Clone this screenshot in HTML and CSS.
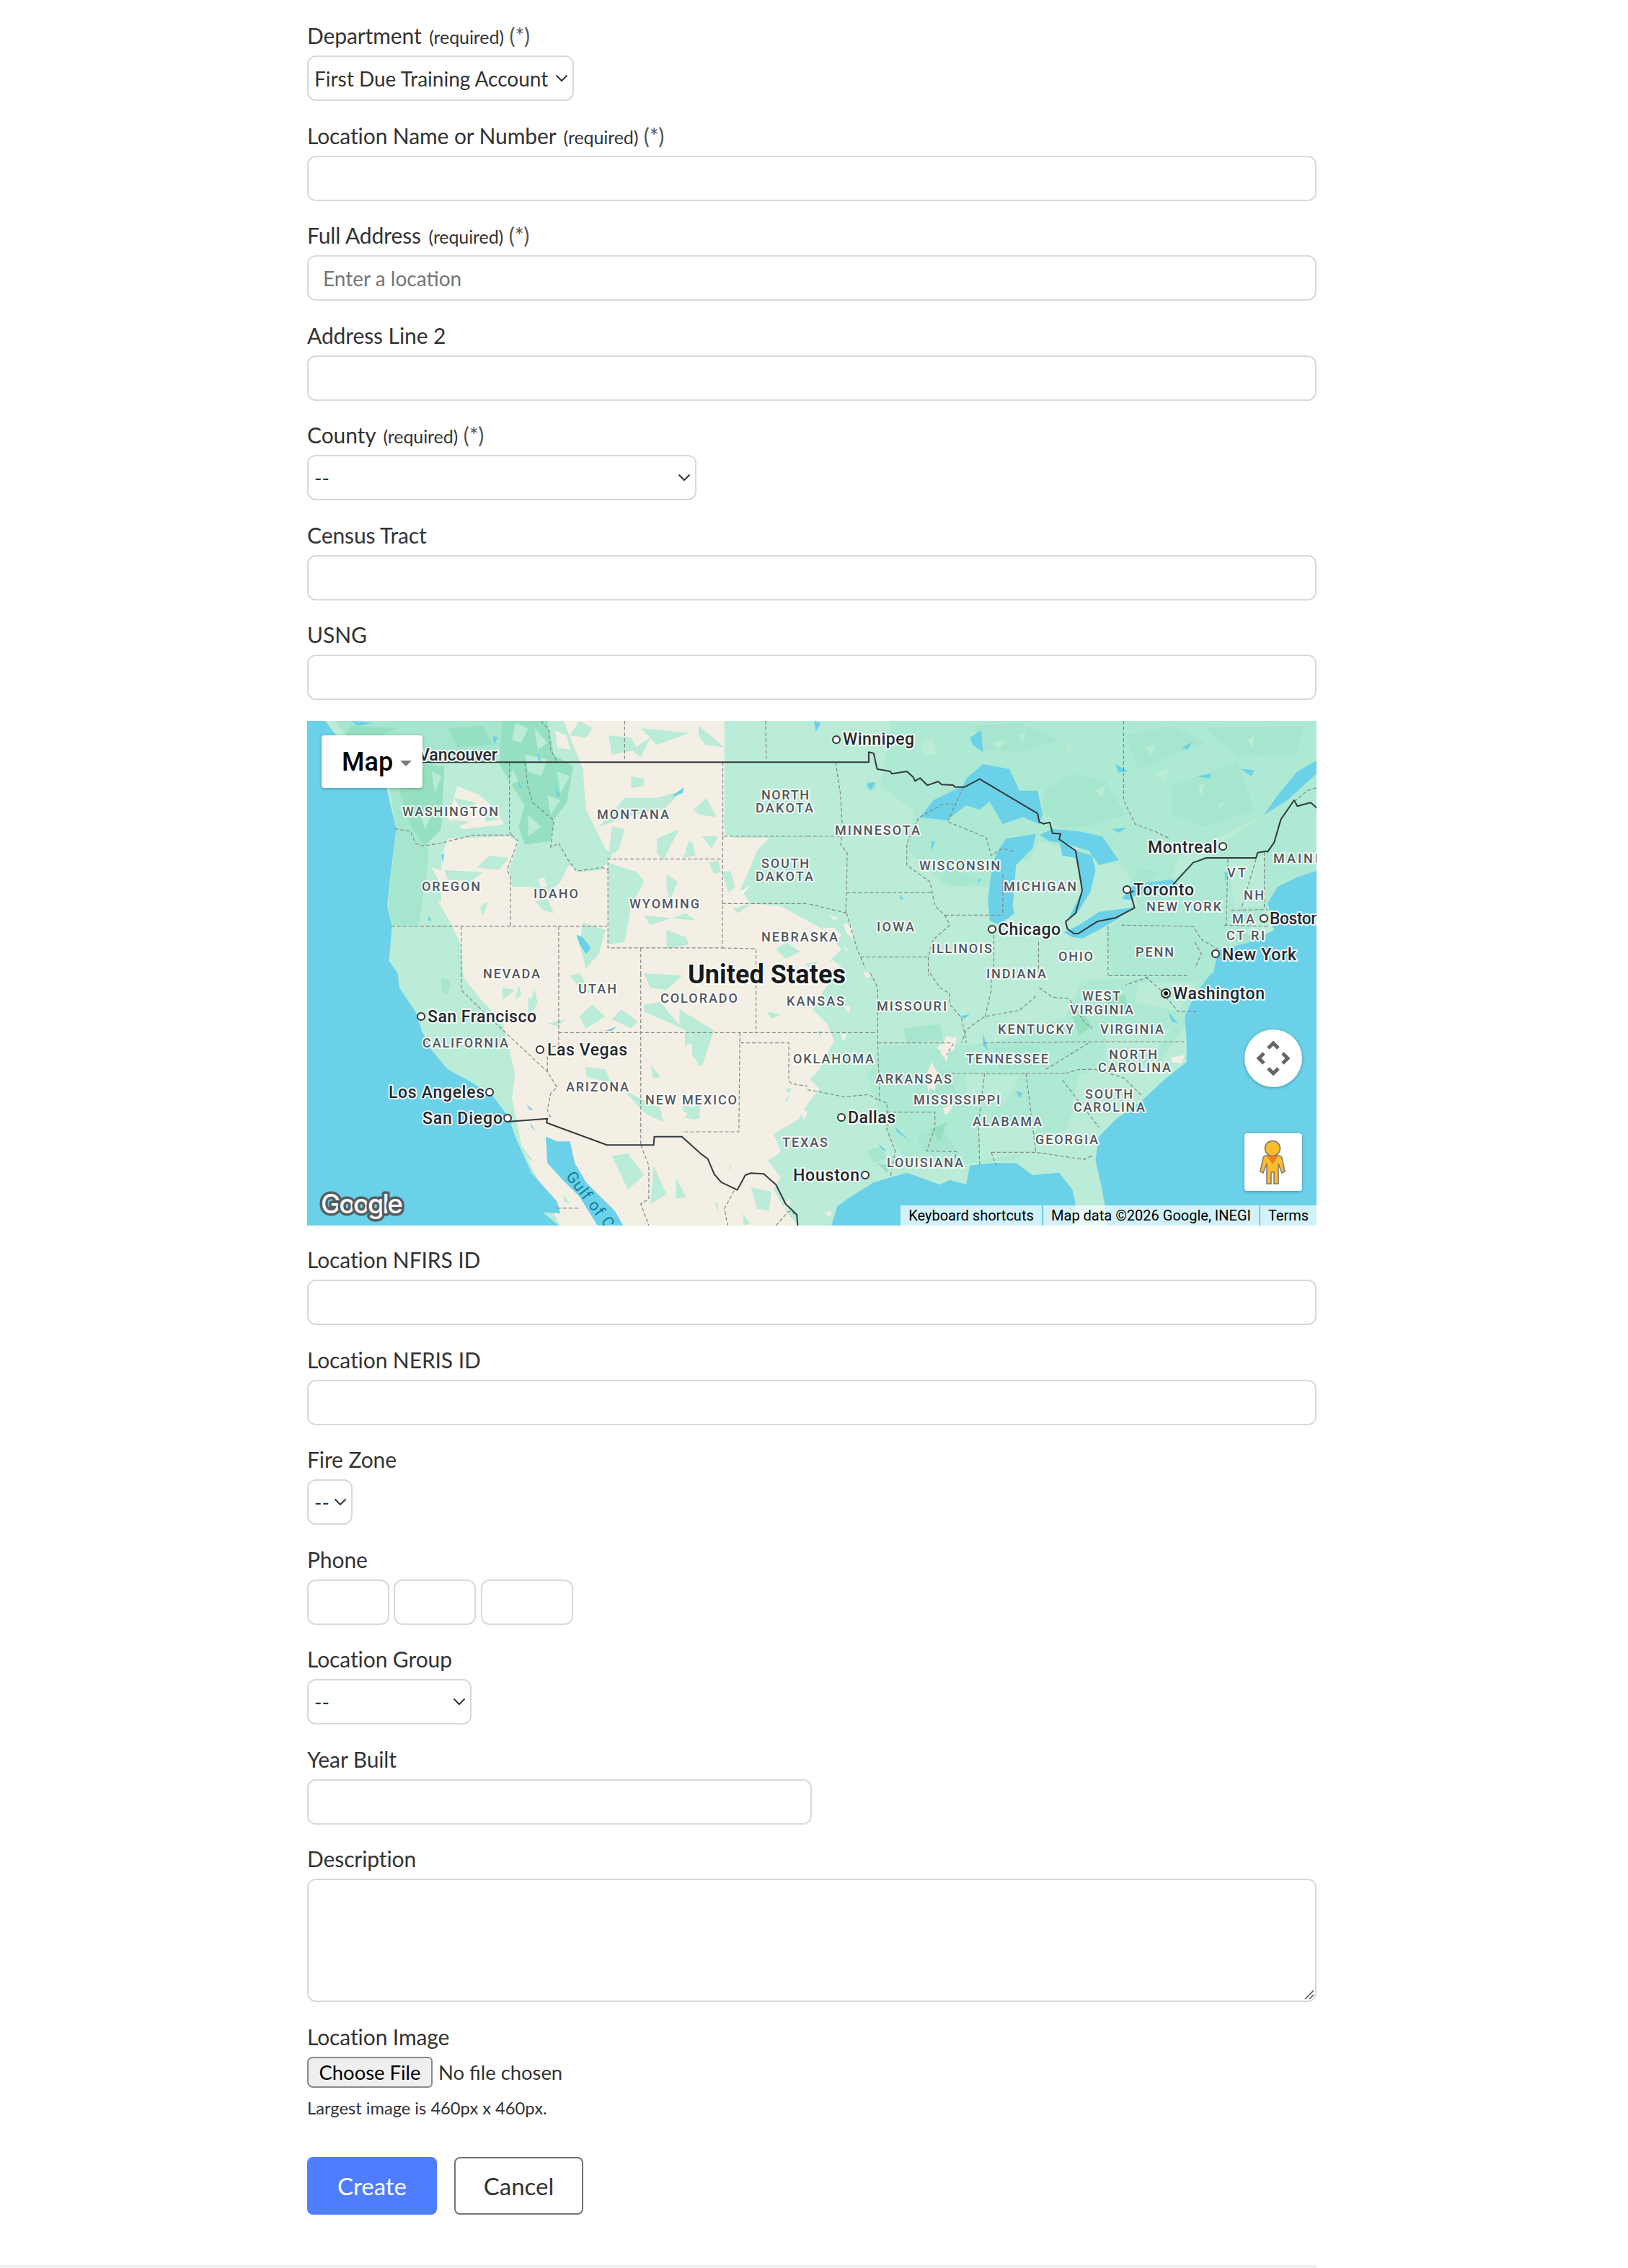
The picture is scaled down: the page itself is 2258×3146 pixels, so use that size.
FILE: index.html
```html
<!DOCTYPE html>
<html lang="en">
<head>
<meta charset="utf-8">
<title>New Location</title>
<link rel="stylesheet" href="styles.css">
</head>
<body>
<main class="page">
<form class="form">
  <div class="field"><label class="label">Department <small class="req">(required)</small> <span class="star">(*)</span></label>
    <select class="ctl sel sel-dept"><option>First Due Training Account</option></select></div>
  <div class="field"><label class="label">Location Name or Number <small class="req">(required)</small> <span class="star">(*)</span></label>
    <input class="ctl txt" type="text"></div>
  <div class="field"><label class="label">Full Address <small class="req">(required)</small> <span class="star">(*)</span></label>
    <input class="ctl txt" type="text" placeholder="Enter a location"></div>
  <div class="field"><label class="label">Address Line 2</label>
    <input class="ctl txt" type="text"></div>
  <div class="field"><label class="label">County <small class="req">(required)</small> <span class="star">(*)</span></label>
    <select class="ctl sel sel-county"><option>--</option></select></div>
  <div class="field"><label class="label">Census Tract</label>
    <input class="ctl txt" type="text"></div>
  <div class="field"><label class="label">USNG</label>
    <input class="ctl txt" type="text"></div>

  <section class="map">
    <svg class="map-svg" viewBox="0 0 1400 700" xmlns="http://www.w3.org/2000/svg">
      <rect class="g1" width="1400" height="700"/>

      <!-- Medium green land, east -->
      <g transform="translate(694,-10) scale(.4591,.3333)">
        <path class="g2" d="M250 30H1545V640L1390 800 1270 1000 1230 1090H920L900 900 1000 800 960 640 700 530 640 700 540 720 420 720 300 560 320 400 220 300 240 150Z"/>
        <path class="g1" d="M1100 690L1230 560 1380 420 1290 480 1120 600ZM1270 600L1380 590 1380 800 1290 810ZM620 600L760 640 800 760 790 850 620 860ZM0 30L180 30 220 130 100 180 0 190Z"/>
        <path class="g3" d="M720 310L800 250 900 280 960 420 850 470 760 470 710 400ZM500 50L640 40 760 110 640 160 520 150ZM1100 300L1300 200 1350 400 1200 470 1100 420ZM960 90L1100 50 1200 120 1000 230ZM1200 60L1500 50 1480 170 1300 180ZM180 280L210 290 200 320 175 310ZM1000 640L1060 660 1020 740 980 700ZM420 640L520 690 470 720 410 700ZM1290 900L1360 930 1300 990Z"/>
        <path class="g1" d="M780 120L800 140 790 180ZM1020 140L1050 130 1040 170ZM870 320L900 300 890 350ZM1180 300L1200 290 1190 340ZM640 90L660 70 650 120ZM1240 380L1260 360 1250 400ZM1330 110L1350 90 1345 140ZM560 120L600 110 575 150ZM340 120L380 100 390 170 350 170ZM1050 250L1090 230 1080 280Z"/>
      </g>
      <g transform="translate(694,350) scale(.4591,.3333)">
        <path class="g2" d="M230 300L450 300 560 290 780 180 830 30 1000 20 1220 0 1150 200 1060 380 850 400 780 650 620 780 480 790 300 780 240 660 180 430Z"/>
        <path class="g1" d="M520 640L680 640 700 740 520 780ZM480 420L640 430 600 540 480 520ZM820 420L950 430 880 560 800 540ZM900 240L1100 230 1050 330 900 360ZM1000 40L1180 40 1120 160 990 120Z"/>
        <path class="g3" d="M290 230L400 210 410 280 300 290ZM360 430L430 400 450 520 370 510ZM560 310L700 300 720 390 580 400ZM330 680L400 640 450 730 350 740ZM180 740L220 720 240 770 200 790Z"/>
        <path class="g4" d="M800 180L830 160 860 220 820 260ZM900 110L960 90 970 160 910 180ZM210 790L250 800 240 830ZM370 650L420 620 400 700Z"/>
        <path class="g0" d="M420 260L450 270 410 350 400 320ZM375 370L385 420 365 500 360 420ZM410 560L440 550 415 590ZM1100 350L1140 340 1130 375 1100 370Z"/>
        <path class="g1" d="M640 600L700 620 690 660 640 650Z"/>
      </g>

      <!-- Tan interior west -->
      <g transform="translate(-6,-10) scale(.4464,.3333)">
        <path class="g3" d="M270 310H380L390 620 360 880H280L265 800 290 480ZM100 30H640L600 200 380 210 260 310Z"/>
        <path class="g4" d="M620 30H760L780 170 840 220 820 370 780 440 770 530 690 545 670 470 690 380 650 300 610 210ZM380 210L440 220 430 480 380 550 340 480 300 320ZM150 50L290 60 230 100 130 90ZM450 60L560 50 590 130 480 140Z"/>
        <path class="g1" d="M660 40L700 60 680 120 650 110ZM720 60L760 120 730 150ZM690 170L760 190 740 260 700 240ZM650 230L670 280 640 300ZM790 240L830 260 800 330ZM760 340L800 360 770 420ZM700 420L740 470 700 510ZM400 240L430 260 410 330ZM360 400L400 420 380 480ZM480 160L560 170 510 200ZM300 120L360 140 320 180Z"/>
        <path class="g3" d="M950 600L1000 620 1010 980 950 980Z"/>
        <path class="g0" d="M810 30H1310V2135H800L680 1800 650 1600 660 1500 620 1280 560 1200 500 1100 490 960 430 790 430 600 450 520 640 510 670 535 640 650 650 720 720 720 760 680 830 630 860 660 930 650 960 590 940 560 880 400 870 230ZM480 300L550 340 600 400 625 460 500 480 450 440ZM785 70L820 90 830 150 790 140Z"/>
        <path class="g1" d="M860 30L900 60 880 100 830 90ZM950 90L1020 100 1040 150 960 170ZM1020 260L1060 270 1060 300 1020 310ZM1000 350L1100 350 1180 320 1120 400 1030 420 920 470ZM960 470L1000 480 980 570 950 590ZM1100 520L1170 480 1150 530 1120 610 1100 580ZM1210 530L1220 590 1180 600ZM1020 150L1080 100 1050 180ZM1230 50L1310 140 1250 130 1230 90ZM1050 60L1200 80 1100 130ZM950 620L1040 660 1060 700 1020 800 1000 950 950 960ZM1130 670L1165 700 1140 780 1130 720ZM1060 840L1220 860 1190 830 1080 880ZM870 870L940 900 920 1000 880 1060 860 960ZM1130 900L1190 930 1200 960 1130 980ZM1310 650L1340 740 1310 760ZM580 590L640 600 610 650 540 640ZM440 650L560 660 520 700 450 690ZM560 790L575 785 560 840 550 810ZM680 720L830 620 800 700 750 760 690 700ZM1260 620L1295 610 1280 660ZM1240 510L1290 510 1270 560ZM720 780L760 770 780 830 750 820ZM470 350L540 370 500 420ZM560 400L610 440 570 450ZM460 440L520 450 480 470Z"/>
        <path class="g0" d="M730 690L750 680 760 720 740 720ZM820 770L835 775 825 790ZM400 640L430 650 430 710ZM420 780L470 800 450 850Z"/>
      </g>
      <g transform="translate(-6,350) scale(.4464,.3333)">
        <path class="g1" d="M620 60L660 70 620 110ZM670 50L680 90 660 110ZM720 60L730 130 710 110ZM860 180L900 130 940 180 880 230ZM760 210L820 190 790 220ZM1060 0L1180 10 1130 70 1080 60ZM1060 130L1110 120 1180 230 1060 160ZM1170 150L1280 240 1210 260 1170 220ZM1200 260L1250 270 1230 390ZM880 390L940 400 960 460 880 430ZM1080 380L1110 430 1090 440ZM1000 490L1110 560 1120 620 1060 580ZM1180 550L1220 560 1220 610 1180 600ZM1450 170L1490 180 1450 190ZM960 760L1010 750 1060 840 1010 900ZM1090 800L1130 920 1080 960ZM1160 850L1190 930 1160 940ZM1400 890L1470 930 1450 1000 1400 1000ZM670 700L720 790 700 770ZM810 920L830 960 810 950ZM830 10L860 0 900 90 860 60ZM990 150L1040 200 1020 230 960 190ZM1480 620L1560 640 1530 720 1480 700ZM1500 520L1510 540 1500 550ZM1280 950L1330 990 1300 1040ZM700 100L730 120 700 200Z"/>
        <path class="g0" d="M1170 570L1195 580 1185 610ZM1150 720L1175 770 1155 765Z"/>
        <path class="g3" d="M430 20L460 30 450 90 430 70ZM300 60L340 160 370 230 340 210Z"/>
      </g>
      <path class="g0" d="M570 140L590 162 641 162 624 180 616 200 601 233 614 253 657 257 681 270 717 290 741 317 724 333 741 343 717 373 701 400 721 420 731 443 711 483 697 497 711 510 697 527 681 553 647 573 657 597 641 613 657 633 647 650 664 680 681 700H570Z"/>
      <g transform="translate(524,100) scale(.3333)">
        <path class="g1" d="M100 290L140 285 150 330 120 335ZM155 330L190 325 210 390 180 415ZM0 240L20 195 40 245ZM35 70L90 20 130 100 60 90ZM200 480L280 460 220 500ZM210 90L270 60 240 120ZM380 650L420 620 480 660 420 690ZM500 710L560 700 520 730ZM340 910L400 920 360 940ZM160 100L200 90 220 170 170 180Z"/>
        <path class="g0" d="M600 510L640 520 620 530ZM660 540L695 550 700 610 670 580ZM575 560L620 560 650 590 630 620ZM740 740L780 760 755 770ZM660 885L690 890 680 915ZM660 640L680 650 670 660ZM605 690L650 720 620 720Z"/>
        <path class="g5" d="M235 410L275 380 240 420Z"/>
      </g>
      <g transform="translate(524,420) scale(.3333)">
        <path class="g1" d="M30 50L120 30 70 180 30 130ZM40 300L65 300 60 400 35 390ZM275 680L360 700 350 780 300 770ZM240 790L270 830 245 840ZM420 270L445 270 430 290ZM420 310L435 300 420 335ZM185 590L195 590 185 615ZM345 570L375 550 370 590ZM0 40L20 40 25 80 0 90ZM550 30L565 30 565 60Z"/>
        <path class="g0" d="M1045 100L1130 50 1120 110 1085 125ZM1075 130L1095 120 1090 160ZM1025 160L1050 200 1040 280 1010 260ZM1080 350L1110 350 1090 380ZM645 40L675 45 660 75ZM480 360L510 365 495 405ZM580 790L610 780 605 805ZM410 760L440 720 430 780Z"/>
      </g>

      <!-- Water -->
      <g class="water">
        <g transform="translate(-6,-10) scale(.4464,.3333)">
          <path d="M0 0H60L70 30 100 85 260 310 290 480 270 700 262 800 277 880 268 1030 295 1080 300 1140 350 1240 370 1320 400 1400 450 1480 520 1530 590 1590 640 1680 660 1760 690 1850 710 1910 790 2030 800 2080 745 2075 800 2135H0Z"/>
          <path d="M850 920L870 930 895 975 880 1000 860 960ZM1150 340L1185 305 1180 330 1150 345ZM785 300L800 340 790 345ZM670 280L680 310 670 300ZM730 160L740 200 730 190ZM390 840L400 860 390 860ZM430 590L440 580 435 620ZM590 90L605 100 595 130ZM150 30L220 40 170 50Z"/>
        </g>
        <g transform="translate(-6,350) scale(.4464,.3333)">
          <path d="M755 680L790 700 830 700 845 790 880 870 970 990 1000 1060H920L860 930 800 850 760 790Z"/>
          <path d="M695 545L715 570 705 570ZM705 620L725 660 710 640ZM940 240L975 222 960 240Z"/>
        </g>
        <g transform="translate(694,-10) scale(.4591,.3333)">
          <path d="M340 432L380 360 470 300 480 270 530 210 610 230 640 320 695 320 710 420 700 460 650 430 590 460 550 365 520 400 480 380 420 445 400 440Z"/>
          <path d="M600 520L690 500 680 560 630 630 620 800 625 830 580 880 550 860 545 770 560 620 580 560Z"/>
          <path d="M700 505L740 480 820 490 890 510 940 610 880 630 850 570 780 540 730 530Z"/>
          <path d="M760 525L810 570 860 590 870 650 855 740 815 830 790 850 830 735 810 600 770 590Z"/>
          <path d="M775 910L820 880 880 825 990 805 930 860 880 900 830 935 800 930Z"/>
          <path d="M950 770L985 710 1040 700 1100 690 1130 720 1040 740 985 760 975 775Z"/>
          <path d="M1545 190V240L1450 360 1380 420 1420 340 1480 240Z"/>
          <path d="M1225 1090L1240 985 1340 950 1410 900 1395 860 1400 840 1390 790 1420 720 1480 680 1545 650V1090Z"/>
          <path d="M490 100L525 70 530 160 500 130ZM920 480L965 475 940 495ZM1310 230L1350 235 1340 260ZM1175 260L1220 250 1215 270ZM930 210L970 240 940 245ZM1130 140L1160 120 1150 150ZM20 30L40 40 25 75ZM180 290L205 285 190 320ZM375 530L385 530 375 570ZM515 690L525 685 515 710ZM280 750L290 775 280 770ZM1260 660L1270 660 1262 700Z"/>
        </g>
        <g transform="translate(694,350) scale(.4591,.3333)">
          <path d="M1220 0L1170 90 1140 180 1145 280 1145 370 1080 440 1010 530 930 610 880 680 870 780 890 900 910 1060H1545V0Z"/>
          <path d="M70 1060L90 970 130 930 200 870 300 830 400 880 430 860 480 880 490 800 560 790 630 790 680 840 760 830 800 900 810 960 800 1060Z"/>
          <path d="M530 250L545 320 530 300ZM460 180L490 170 475 190ZM265 640L310 700 270 660ZM215 710L240 740 225 735ZM630 490L650 500 640 520ZM1090 160L1120 210 1100 200Z"/>
        </g>
      </g>

      <!-- State and province lines -->
      <g class="dash">
        <g transform="translate(-6,-10) scale(.4464,.3333)">
          <path d="M642 205V490L650 510M285 478L335 490 350 540 375 550 425 540 530 505 650 505 668 530 635 650 645 680 645 885M690 205L700 310 715 370 780 445 770 555 795 540 825 610 850 655 930 640 948 650V605H1303M1305 202V510H1568M1305 510L1303 975H948V650M1303 790H1568M1303 975L1408 978 1408 1090M275 885H945M795 885V1090M492 885V1090M1050 975V1090M740 30L765 70 770 150 790 200M1000 30V202M1438 30L1440 202"/>
        </g>
        <g transform="translate(-6,350) scale(.4464,.3333)">
          <path d="M492 0V70L600 210 760 410 790 475 770 500 760 570 770 600M795 0V300L760 310V410M795 247H1568M1050 0V715M1358 247L1355 660H1178M1360 290H1510V450L1520 460 1568 470M1408 50V247M1050 715L1075 800 1075 940 1050 960 1075 1050M790 978H860M1340 905L1310 980 1320 1050M1470 1050L1510 990 1535 1005"/>
        </g>
        <g transform="translate(694,-10) scale(.4591,.3333)">
          <path d="M85 202L100 340 105 470 100 545 120 580 118 745 115 830M0 510H100M118 745H380M470 305L425 445M340 430L410 375H440M335 435L300 540 300 630 370 700 385 800 415 840 430 880 380 940 365 1010V1090M425 450L540 515 555 590 590 560 625 575M590 670V840M415 838H590M563 920V1090M698 950V1090M118 830L0 790M160 1012H365M118 830L150 980 175 1060M908 885V1090M948 880L1165 885 1190 940 1240 980M1170 950L1190 1000 1170 1060M1270 605L1265 880M1355 605L1310 815M1380 575V810M1280 818L1390 815M1258 880L1390 885M955 30V360L990 460 1050 490 1095 520M1470 365L1510 320 1545 305"/>
        </g>
        <g transform="translate(694,350) scale(.4591,.3333)">
          <path d="M190 0L212 60 212 290 218 530 240 540 240 650 265 740 250 850M0 247H212M212 290H430L440 295 420 340M535 290L860 285 1140 285M0 485L50 497 110 515 185 505 218 530M240 578H385V640L360 740 450 742 445 775M517 640L520 795M435 417H780M535 417L515 640M660 417L690 745M555 745H690L835 775 860 760M555 745L570 800M770 445L880 640M780 417L820 400 870 400 955 435 1010 510M720 400L850 290M465 185L480 290M700 60L740 100 790 105 835 200 860 230M555 0V70L535 190M690 95L640 155 535 180 480 235 465 290M370 0L400 60 430 85 430 130 465 185M910 10H1150M1030 15L960 50M1020 15L1060 60 1120 160 1175 160"/>
        </g>
      </g>

      <!-- International borders -->
      <g class="border">
        <g transform="translate(-6,-10) scale(.4464,.3333)">
          <path d="M370 202H1568"/>
        </g>
        <g transform="translate(694,-10) scale(.4591,.3333)">
          <path d="M0 202H185V160L200 165 210 230 250 240 255 250 300 240 320 265 325 280 340 268 362 298 395 282 405 295 440 297 445 305 475 305 520 272 695 415 700 450 712 458 732 452 740 497 765 500 760 522 810 570 830 735 810 830 780 865 785 895 805 915H818L875 865 930 850 988 808 975 745 985 738M1105 710L1165 620 1205 600H1355L1360 578 1385 572 1390 575 1410 535 1430 440 1470 360 1480 385 1520 370 1545 400"/>
        </g>
        <g transform="translate(-6,350) scale(.4464,.3333)">
          <path d="M635 618L760 605 757 622 945 715H1090L1092 680H1178L1240 755 1258 772 1278 835 1300 870 1350 902 1375 840 1392 832 1432 835 1470 880 1500 960 1535 1005 1538 1060"/>
        </g>
      </g>

      <!-- Labels -->
      <g class="states">
        <text x="132" y="132" textLength="133">WASHINGTON</text>
        <text x="402" y="136" textLength="100">MONTANA</text>
        <text x="159" y="236" textLength="81">OREGON</text>
        <text x="314" y="246" textLength="62">IDAHO</text>
        <text x="447" y="260" textLength="97">WYOMING</text>
        <text x="630" y="109" textLength="66">NORTH</text>
        <text x="622" y="127" textLength="80">DAKOTA</text>
        <text x="630" y="204" textLength="66">SOUTH</text>
        <text x="622" y="222" textLength="80">DAKOTA</text>
        <text x="630" y="306" textLength="106">NEBRASKA</text>
        <text x="244" y="357" textLength="79">NEVADA</text>
        <text x="376" y="378" textLength="53">UTAH</text>
        <text x="490" y="391" textLength="107">COLORADO</text>
        <text x="665" y="395" textLength="80">KANSAS</text>
        <text x="160" y="453" textLength="119">CALIFORNIA</text>
        <text x="359" y="514" textLength="87">ARIZONA</text>
        <text x="469" y="532" textLength="127">NEW MEXICO</text>
        <text x="674" y="475" textLength="112">OKLAHOMA</text>
        <text x="659" y="591" textLength="63">TEXAS</text>
        <text x="732" y="158" textLength="118">MINNESOTA</text>
        <text x="849" y="207" textLength="112">WISCONSIN</text>
        <text x="966" y="236" textLength="101">MICHIGAN</text>
        <text x="790" y="292" textLength="52">IOWA</text>
        <text x="866" y="322" textLength="84">ILLINOIS</text>
        <text x="1042" y="333" textLength="48">OHIO</text>
        <text x="1149" y="327" textLength="53">PENN</text>
        <text x="942" y="357" textLength="83">INDIANA</text>
        <text x="1164" y="264" textLength="104">NEW YORK</text>
        <text x="1340" y="197" textLength="68">MAINE</text>
        <text x="1276" y="217" textLength="26">VT</text>
        <text x="1299" y="248" textLength="28">NH</text>
        <text x="1283" y="281" textLength="31">MA</text>
        <text x="1275" y="304" textLength="53">CT RI</text>
        <text x="790" y="402" textLength="97">MISSOURI</text>
        <text x="1075" y="388" textLength="53">WEST</text>
        <text x="1058" y="407" textLength="88">VIRGINIA</text>
        <text x="958" y="434" textLength="105">KENTUCKY</text>
        <text x="1100" y="434" textLength="88">VIRGINIA</text>
        <text x="914" y="475" textLength="114">TENNESSEE</text>
        <text x="1112" y="469" textLength="67">NORTH</text>
        <text x="1097" y="487" textLength="101">CAROLINA</text>
        <text x="788" y="503" textLength="106">ARKANSAS</text>
        <text x="841" y="532" textLength="120">MISSISSIPPI</text>
        <text x="1079" y="524" textLength="66">SOUTH</text>
        <text x="1063" y="542" textLength="99">CAROLINA</text>
        <text x="923" y="562" textLength="96">ALABAMA</text>
        <text x="1010" y="587" textLength="87">GEORGIA</text>
        <text x="804" y="619" textLength="106">LOUISIANA</text>
      </g>
      <text class="gulf" transform="translate(358,632) rotate(52)">Gulf of California</text>
      <g class="dots">
        <circle cx="734" cy="26" r="5"/><circle cx="158" cy="410" r="5"/><circle cx="323" cy="456" r="5"/>
        <circle cx="253" cy="515" r="5"/><circle cx="278" cy="551" r="5"/><circle cx="774" cy="630" r="5"/>
        <circle cx="950" cy="289" r="5"/><circle cx="1270" cy="174" r="5"/><circle cx="1137" cy="234" r="5"/>
        <circle cx="1327" cy="274" r="5"/><circle cx="1260" cy="323" r="5"/><circle cx="741" cy="550" r="5"/>
        <circle cx="1191" cy="378" r="6"/><circle class="dot-cap" cx="1191" cy="378" r="3"/>
      </g>
      <g class="cities">
        <text x="264" y="55" text-anchor="end">Vancouver</text>
        <text x="743" y="33" textLength="99">Winnipeg</text>
        <text x="167" y="418" textLength="151">San Francisco</text>
        <text x="333" y="464" textLength="111">Las Vegas</text>
        <text x="113" y="523" textLength="133">Los Angeles</text>
        <text x="160" y="559" textLength="111">San Diego</text>
        <text x="674" y="638" textLength="92">Houston</text>
        <text x="958" y="297" textLength="87">Chicago</text>
        <text x="1166" y="183" textLength="96">Montreal</text>
        <text x="1146" y="242" textLength="84">Toronto</text>
        <text x="1335" y="282" textLength="70">Boston</text>
        <text x="1269" y="332" textLength="103">New York</text>
        <text x="1201" y="386" textLength="127">Washington</text>
        <text x="750" y="558" textLength="66">Dallas</text>
      </g>
      <text class="country" x="528" y="364" textLength="219">United States</text>
      <text class="google" x="19" y="683" textLength="113">Google</text>
    </svg>

    <div class="map-type"><span>Map</span><i class="caret"></i></div>

    <div class="compass">
      <svg viewBox="0 0 80 80" width="80" height="80" xmlns="http://www.w3.org/2000/svg"><path class="chev" d="M33 26L40 19 47 26M27 33L20 40 27 47M53 33L60 40 53 47M33 54L40 61 47 54"/></svg>
    </div>
    <div class="pegman">
      <svg viewBox="0 0 80 80" width="80" height="80" xmlns="http://www.w3.org/2000/svg">
        <path class="peg-body" d="M30 31H48Q51 31 52 34L56 53 52 55 47 42V70H41V54H37V70H31V42L26 55 22 53 26 34Q27 31 30 31Z"/>
        <circle class="peg-body" cx="39" cy="21" r="10.5"/>
        <path class="peg-scarf" d="M31 31H47L39 43Z"/>
      </svg>
    </div>
    <div class="attrib">
      <span class="attrib-item">Keyboard shortcuts</span>
      <span class="attrib-item attrib-data">Map data ©2026 Google, INEGI</span>
      <span class="attrib-item attrib-terms">Terms</span>
    </div>
  </section>

  <div class="field"><label class="label">Location NFIRS ID</label>
    <input class="ctl txt" type="text"></div>
  <div class="field"><label class="label">Location NERIS ID</label>
    <input class="ctl txt" type="text"></div>
  <div class="field"><label class="label">Fire Zone</label>
    <select class="ctl sel sel-zone"><option>--</option></select></div>
  <div class="field"><label class="label">Phone</label>
    <div class="phone">
      <input class="ctl txt ph-a" type="text"><input class="ctl txt ph-a" type="text"><input class="ctl txt ph-b" type="text">
    </div></div>
  <div class="field"><label class="label">Location Group</label>
    <select class="ctl sel sel-group"><option>--</option></select></div>
  <div class="field"><label class="label">Year Built</label>
    <input class="ctl txt half" type="text"></div>
  <div class="field"><label class="label">Description</label>
    <textarea class="ctl area"></textarea></div>
  <div class="field field-file"><label class="label">Location Image</label>
    <input class="file" type="file">
    <p class="hint">Largest image is 460px x 460px.</p></div>
  <div class="actions">
    <button class="btn btn-primary" type="button">Create</button>
    <button class="btn btn-outline" type="button">Cancel</button>
  </div>
</form>
</main>
<footer class="foot"></footer>
</body>
</html>
```
FILE: styles.css
```css
* { box-sizing: border-box; }
html, body { margin: 0; padding: 0; background: #fff; }
body { font-family: "Lato", "Liberation Sans", sans-serif; color: #333; font-size: 30px; }
.page { width: 1400px; margin-left: 426px; padding-top: 27px; }
.form { display: flex; flex-direction: column; align-items: stretch; }
.field { margin-bottom: 25.5px; }
.label { display: block; height: 44px; line-height: 44px; margin-bottom: 6px; font-size: 30px; letter-spacing: -.1px; color: #333; white-space: nowrap; }
.req { font-size: 25px; margin-left: 3px; }
.star { color: #555; }
.ctl { display: block; height: 63px; background: #fff; border: 2px solid #d9d9d9; border-radius: 12px; font-family: "Lato", "Liberation Sans", sans-serif; font-size: 28px; color: #333; outline: none; margin: 0; }
.txt { width: 100%; padding: 0 20px; }
.txt::placeholder { color: #757575; opacity: 1; }
.sel { appearance: none; -webkit-appearance: none; padding: 0 26px 0 8px; background-repeat: no-repeat; background-position: right 6px center; background-size: 18px 11px; background-image: url("data:image/svg+xml,%3Csvg xmlns='http://www.w3.org/2000/svg' viewBox='0 0 18 11'%3E%3Cpath d='M1.5 1.5L9 9l7.5-7.5' fill='none' stroke='%23333' stroke-width='2'/%3E%3C/svg%3E"); }
.sel-dept { width: 370px; }
.sel-county { width: 540px; }
.sel-zone { width: 63px; }
.sel-group { width: 228px; }
.half { width: 700px; }
.area { width: 100%; height: 171px; padding: 10px 20px; }
.area::-webkit-resizer { background-repeat: no-repeat; background-position: right bottom; background-image: url("data:image/svg+xml,%3Csvg xmlns='http://www.w3.org/2000/svg' width='16' height='16'%3E%3Cpath d='M2 14L14 2M8 14L14 8' stroke='%23555' stroke-width='1.6'/%3E%3C/svg%3E"); }
.phone { display: flex; gap: 6px; }
.ph-a { width: 114px; }
.ph-b { width: 128px; margin-left: 1px; }

/* map */
.map { position: relative; width: 1400px; height: 700px; margin: 3.5px 0 25px; overflow: hidden; background: #6ad1e8; }
.map-svg { display: block; width: 1400px; height: 700px; }
.g0 { fill: #f4efe4; }
.g1 { fill: #baecd8; }
.g2 { fill: #aee9d3; }
.g3 { fill: #a6e6ce; }
.g4 { fill: #95e0c0; }
.g5 { fill: #fff; }
.water path { fill: #6ad1e8; }
.dash path { fill: none; stroke: #85878a; stroke-width: 1.2; stroke-dasharray: 5 3; vector-effect: non-scaling-stroke; }
.border path { fill: none; stroke: #333a3c; stroke-width: 2; vector-effect: non-scaling-stroke; stroke-linejoin: round; }
.states text { font-family: "Roboto", "Liberation Sans", sans-serif; font-weight: 500; font-size: 18px; fill: #51565e; stroke: #fff; stroke-width: 4px; stroke-opacity: .85; paint-order: stroke; stroke-linejoin: round; }
.cities text { font-family: "Roboto", "Liberation Sans", sans-serif; font-weight: 500; font-size: 23px; fill: #24282c; stroke: #fff; stroke-width: 4px; stroke-opacity: .9; paint-order: stroke; stroke-linejoin: round; }
.dots circle { fill: #fff; stroke: #333; stroke-width: 2; }
.dots .dot-cap { fill: #111; stroke: none; }
.gulf { font-family: "Roboto", "Liberation Sans", sans-serif; font-size: 22px; fill: #0f7f9c; letter-spacing: 1px; }
.country { font-family: "Roboto", "Liberation Sans", sans-serif; font-weight: 700; font-size: 36px; fill: #17191c; stroke: #fff; stroke-width: 4px; paint-order: stroke; stroke-linejoin: round; }
.google { font-family: "Inter", "Liberation Sans", sans-serif; font-weight: 500; font-size: 37px; fill: #fff; stroke: #555c60; stroke-width: 7px; paint-order: stroke; stroke-linejoin: round; letter-spacing: -1px; }

.map-type { position: absolute; left: 20px; top: 20px; width: 140px; height: 73px; background: #fff; border-radius: 4px; box-shadow: 0 1px 4px rgba(0,0,0,.3); display: flex; align-items: center; padding-left: 28px; gap: 10px; font-family: "Roboto", "Liberation Sans", sans-serif; font-weight: 500; font-size: 36px; color: #000; }
.caret { display: block; width: 0; height: 0; border-left: 8px solid transparent; border-right: 8px solid transparent; border-top: 8px solid #7a7a7a; margin-top: 4px; }
.compass { position: absolute; left: 1300px; top: 428px; width: 80px; height: 80px; border-radius: 50%; background: #fff; box-shadow: 0 1px 4px rgba(0,0,0,.3); }
.compass svg, .pegman svg { display: block; }
.chev { fill: none; stroke: #666; stroke-width: 5; }
.pegman { position: absolute; left: 1300px; top: 572px; width: 80px; height: 80px; background: #fff; border-radius: 4px; box-shadow: 0 1px 4px rgba(0,0,0,.3); }
.peg-body { fill: #fdbc2a; stroke: #7b7b7b; stroke-width: 1.6; }
.peg-scarf { fill: #e0762c; opacity: .85; }
.attrib { position: absolute; right: 0; bottom: 0; height: 28px; display: flex; gap: 2px; font-family: "Roboto", "Liberation Sans", sans-serif; font-size: 20px; color: #000; }
.attrib-item { width: 196px; height: 28px; line-height: 28px; text-align: center; background: rgba(255,255,255,.7); white-space: nowrap; }
.attrib-data { width: 299px; }
.attrib-terms { width: 78px; }

/* file + actions */
.field-file { margin-bottom: 0; }
.file { display: block; font-family: "Lato", "Liberation Sans", sans-serif; font-size: 27.4px; color: #333; height: 43px; width: 600px; }
.file::file-selector-button { font-family: "Lato", "Liberation Sans", sans-serif; font-size: 27.4px; color: #000; width: 174px; height: 43px; padding: 0; margin: 0 8px 0 0; background: #efefef; border: 2px solid #8a8a8a; border-radius: 8px 6px 6px 8px; }
.hint { margin: 11px 0 0; font-size: 23.7px; line-height: 34px; color: #333; }
.actions { display: flex; gap: 24px; margin-top: 51px; }
.btn { width: 180px; height: 80px; border-radius: 8px; font-family: "Lato", "Liberation Sans", sans-serif; font-size: 33px; padding: 0; }
.btn-primary { background: #4f7dff; border: 0; color: #fff; }
.btn-outline { width: 179px; background: #fff; border: 2px solid #757575; color: #333; }
.foot { position: absolute; left: 0; top: 3142px; width: 1826px; height: 4px; background: #f2f2f2; border-top: 1px solid #ececec; }
```
